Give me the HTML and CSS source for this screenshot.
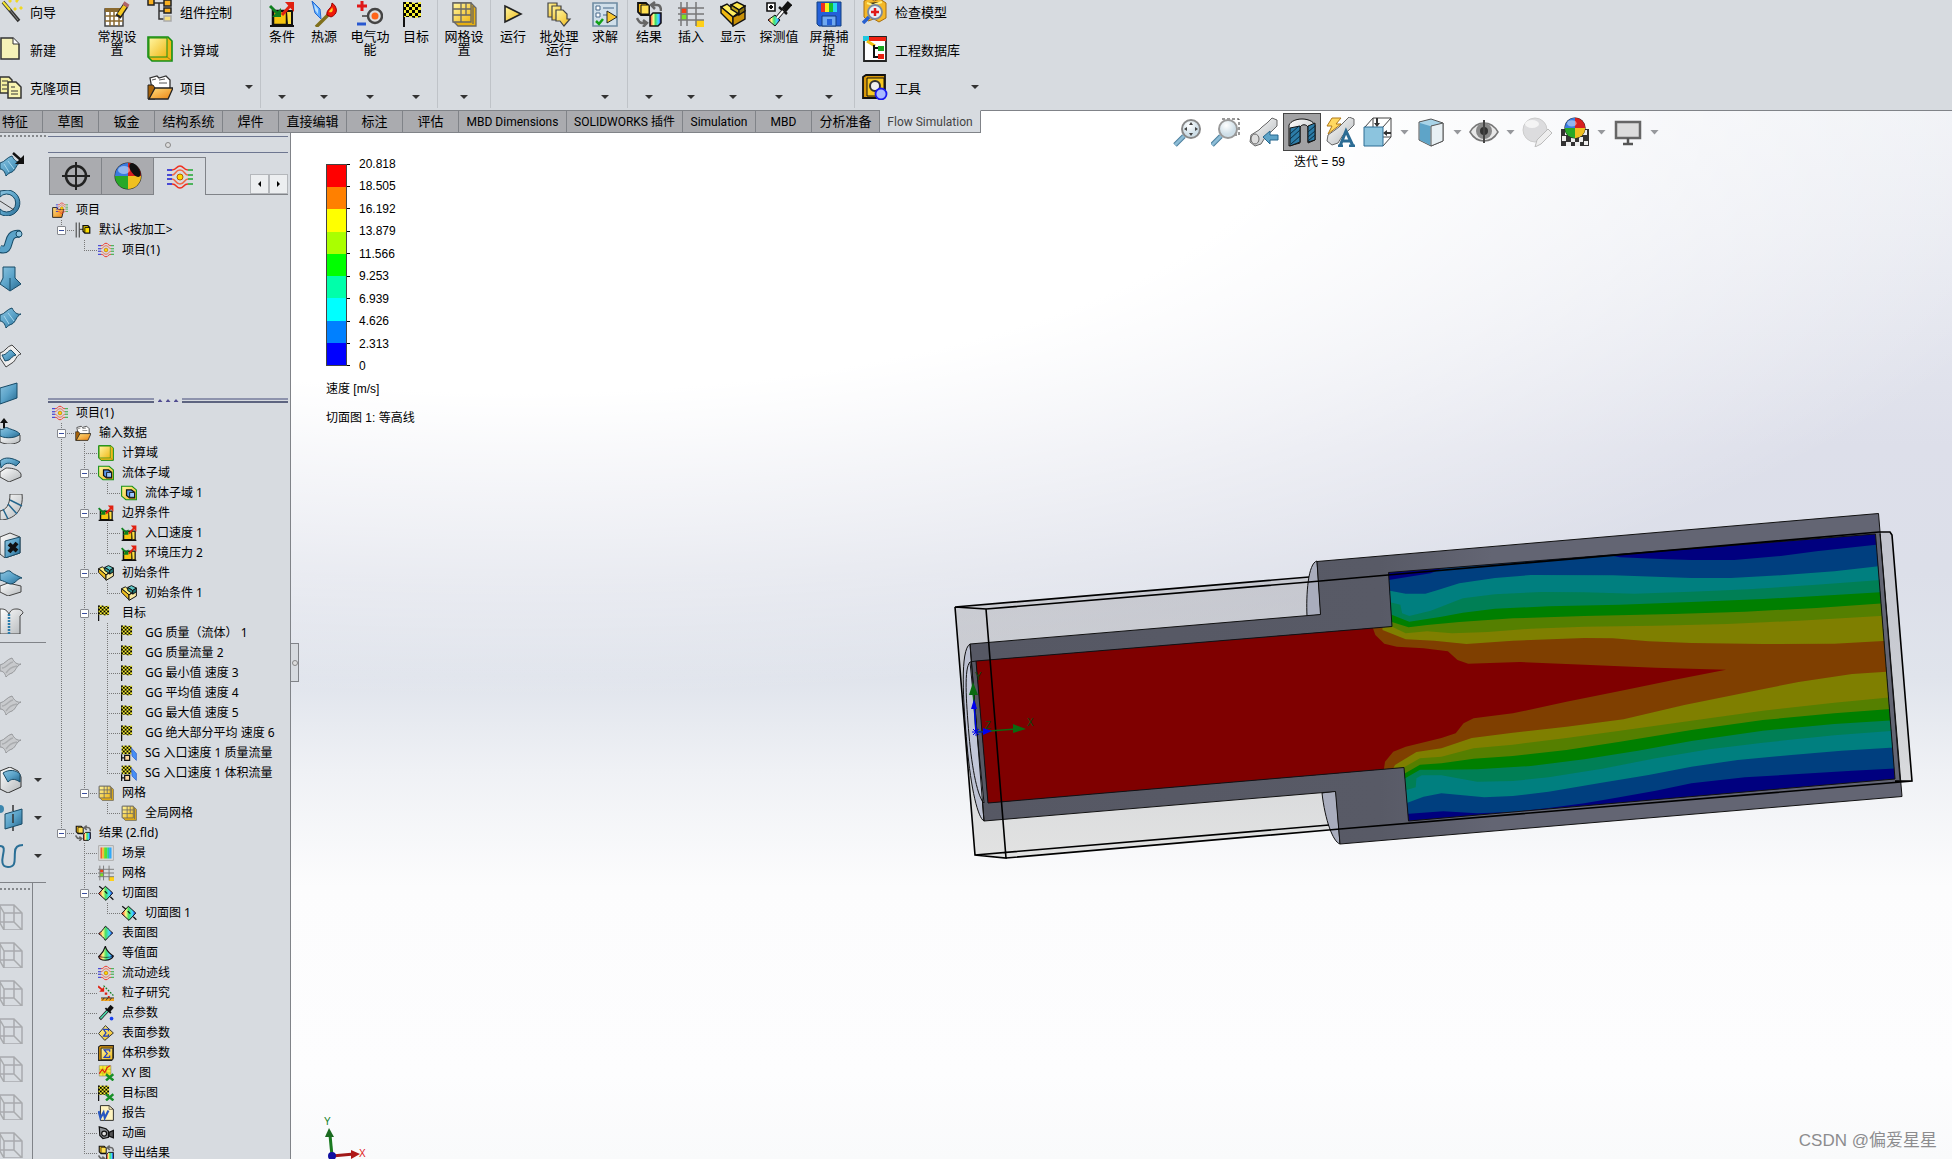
FILE: index.html
```html
<!DOCTYPE html>
<html lang="zh-CN">
<head>
<meta charset="utf-8">
<title>Flow Simulation</title>
<link rel="stylesheet" href="styles.css">
</head>
<body>
<svg class="defs" aria-hidden="true">
<defs>
<linearGradient id="gold" x1="0" y1="0" x2="1" y2="1"><stop offset="0" stop-color="#fff6a0"/><stop offset="1" stop-color="#f0b818"/></linearGradient>
<linearGradient id="orange" x1="0" y1="0" x2="1" y2="1"><stop offset="0" stop-color="#ffe080"/><stop offset="1" stop-color="#ea8210"/></linearGradient>
<linearGradient id="steel" x1="0" y1="0" x2="1" y2="1"><stop offset="0" stop-color="#8cc4e0"/><stop offset=".5" stop-color="#5aa2c8"/><stop offset="1" stop-color="#25678e"/></linearGradient>
<linearGradient id="silver" x1="0" y1="0" x2="1" y2="1"><stop offset="0" stop-color="#fff"/><stop offset="1" stop-color="#b4b8bb"/></linearGradient>
<linearGradient id="rain"><stop offset="0" stop-color="#f22"/><stop offset=".3" stop-color="#ff8"/><stop offset=".5" stop-color="#4d6"/><stop offset=".75" stop-color="#4df"/><stop offset="1" stop-color="#22e"/></linearGradient>
<radialGradient id="glass" cx=".4" cy=".3"><stop offset="0" stop-color="#fff"/><stop offset="1" stop-color="#cfdfe8"/></radialGradient>
<pattern id="check" width="6" height="6" patternUnits="userSpaceOnUse"><path fill="#f6ee30" d="M0 0h6v6H0z"/><path d="M0 0h3v3H0zM3 3h3v3H3z"/></pattern>
</defs>
<symbol id="i-wand" viewBox="0 0 26 26"><path d="M3 4 19 23" stroke="#333" stroke-width="3.5"/><path d="m3 4 7 8" stroke="#f4e430" stroke-width="2"/><path d="m10 12 8 10" stroke="#888"/><path fill="#f0d820" d="m10 1 2 2-2 2-2-2zm7 0 2 1-2 3-2-2zm-2 8 2 2-2 2-2-2zm6-1 2 2-2 2-2-2z"/></symbol>
<symbol id="i-new" viewBox="0 0 26 26"><path fill="#f6f2b8" stroke="#333" stroke-width="1.5" d="M1 2h12l6 6v15H1z"/><path fill="#fff" stroke="#333" d="M13 2v6h6"/></symbol>
<symbol id="i-clone" viewBox="0 0 26 26"><path fill="#f5f0a0" stroke="#333" stroke-width="1.5" d="M0 3h9l3 3v13H0z"/><path fill="#f8f4b0" stroke="#333" stroke-width="1.5" d="M8 8h8l5 5v11H8z"/><path stroke="#333" d="M2 7h6M2 11h5M2 15h5M11 13h4m-4 4h7m-7 3h7"/></symbol>
<symbol id="i-general" viewBox="0 0 26 26"><path fill="#fff" stroke="#444" stroke-width="1.5" d="M1 8h18v17H1z"/><path fill="#8a6a30" d="M1 7h18v4H1z"/><path stroke="#8a6a30" stroke-width="1.5" d="M6 11v14m4-14v14m5-14v14M1 15h18M1 20h18"/><path stroke="#222" stroke-width="6" d="m14 16 8-12"/><path stroke="#f5c820" stroke-width="4" d="m15 14 6-9"/><path stroke="#b0656a" stroke-width="6" d="m21 5 2-3"/></symbol>
<symbol id="i-comp" viewBox="0 0 26 26"><path fill="none" stroke="#333" stroke-width="1.5" d="M7 5h10M12 5v16h5M12 13h5"/><g stroke="#222" stroke-width="1.5" fill="#f9b020"><path d="M1 1h6v6H1zM17 2h7v6h-7zM17 10h7v5h-7z"/><path fill="#f8e080" stroke="#aaa" d="M17 18h7v5h-7z"/></g></symbol>
<symbol id="i-domain" viewBox="0 0 26 26"><path fill="#f0b818" stroke="#169016" stroke-width="1.6" d="M1 1h20l4 4v20H5l-4-4z"/><path fill="url(#gold)" stroke="#169016" d="M2 2h18v19H2z"/><path fill="none" stroke="#a87a08" d="m20 21 4 3"/></symbol>
<symbol id="i-project" viewBox="0 0 26 26"><path fill="#fff" stroke="#333" stroke-width="1.3" d="M5 15 3 4l7-2 2 2 7-2 4 4v9z"/><path stroke="#555" d="m12 6 6-1m-6 4h8M5 6l4-1"/><path fill="#a86208" stroke="#222" d="M1 11h5l2 3v11H1z"/><path fill="url(#orange)" stroke="#222" stroke-width="1.3" d="M2 25 8 14h18l-5 11z"/></symbol>
<symbol id="i-bc" viewBox="0 0 26 26"><path fill="#f6c510" stroke="#111" stroke-width="2.5" d="M4 10h14v14H4z"/><path fill="#ffe040" stroke="#111" stroke-width="2" d="M18 10h5v14h-4"/><path stroke="#111" stroke-width="2" d="M1 25h24"/><path stroke="#108020" stroke-width="3" d="m1 5 8 8"/><path fill="#108020" d="M12 7v9H3z"/><path stroke="#e02010" stroke-width="3" d="m13 14 8-9"/><path fill="#e02010" d="M16 1h9v10z"/></symbol>
<symbol id="i-heat" viewBox="0 0 26 26"><path fill="#58a8ff" stroke="#2468d0" d="m1 0 8 8 1 10-6-6z"/><path fill="#b8e0ff" d="m3 3 4 5v5L4 9z"/><path stroke="#80701c" stroke-width="3.5" d="m5 26 13-13"/><path fill="#f01808" stroke="#900" d="M16 14c-1-6 5-6 5-12 5 3 7 11-1 14z"/><path fill="#ffd020" d="M18 11c1-3 3-3 3-5 2 4 0 6-3 5z"/></symbol>
<symbol id="i-elec" viewBox="0 0 26 26"><path stroke="#e01818" stroke-width="3" d="M5 0v10M0 5h10"/><path stroke="#2858d0" stroke-width="3" d="M0 23h9"/><path stroke="#666" stroke-width="2" d="M5 15h9"/><circle cx="18" cy="15" r="7" fill="#ddd" stroke="#444" stroke-width="2.5"/><circle cx="18" cy="15" r="3.5" fill="#ff6418"/></symbol>
<symbol id="i-flag" viewBox="0 0 26 26"><path d="M1 1v25" stroke="#111" stroke-width="2"/><path fill="url(#check)" d="M1 1h6l5 1 6-1v15l-6 1-5-1H1z"/></symbol>
<symbol id="i-mesh" viewBox="0 0 26 26"><path fill="#e8b010" stroke="#666" stroke-width="1.3" d="M2 2h18l5 5v18H7l-5-5z"/><path fill="url(#gold)" stroke="#666" stroke-width="1.3" d="M2 2h18v19H2z"/><path stroke="#666" stroke-width="1.3" d="M2 14h18M10 2v19m5-19v12M2 8h18M22 5v18"/></symbol>
<symbol id="i-run" viewBox="0 0 26 26"><path fill="url(#gold)" stroke="#222" stroke-width="1.6" d="M5 5v16l16-8z"/></symbol>
<symbol id="i-batch" viewBox="0 0 26 26"><g fill="url(#gold)" stroke="#444" stroke-width="1.2"><path d="M2 2h9v14H2z"/><path d="M6 5h9v14H6z"/><path d="M10 9h7l4 4v5h3l-6 7-4-5h-4z"/></g></symbol>
<symbol id="i-solve" viewBox="0 0 26 26"><path fill="#d0dfea" stroke="#6f8ca3" stroke-width="1.6" d="M1 2h24v23H1z"/><path fill="#fff" stroke="#46688a" d="M4 5h4v4H4zM4 12h4v4H4z"/><path stroke="#46688a" d="M11 7h11M11 14h6"/><path fill="none" stroke="#12a018" stroke-width="2.5" d="m4 20 3 3 4-5"/><path fill="#f8c830" stroke="#222" d="M15 10v12l10-6z"/></symbol>
<symbol id="i-results" viewBox="0 0 26 26"><path fill="#f4b810" stroke="#111" stroke-width="1.8" d="M2 2h8l3 3v9H5l-3-3z"/><path fill="#ffe050" stroke="#111" d="M5 4h8v9H5z"/><path fill="url(#rain)" stroke="#111" stroke-width="1.5" d="m14 15 3-3h8v10l-3 3h-8z"/><path fill="none" stroke="#666" stroke-width="2.5" d="M16 4h5c3 0 4 3 4 6M19 1l-4 3 4 4M10 22H6c-3 0-4-3-5-5m6 2 4 3-4 4"/></symbol>
<symbol id="i-insert" viewBox="0 0 26 26"><path fill="#f44018" d="M3 7h6v5H3z"/><path fill="#80e028" d="M3 13h6v6H3z"/><path fill="#ffd018" d="M18 19h8v7h-8z"/><path stroke="#777" stroke-width="1.5" d="M0 7h26M0 13h26M0 19h26M3 1v24m6-24v24m9-24v24"/></symbol>
<symbol id="i-show" viewBox="0 0 26 26"><g stroke="#111" stroke-width="1.4"><path fill="#ffee60" d="m1 6 6-3 11 9-5 4z"/><path fill="#f0b810" d="M1 6v6l12 12v-8z"/><path fill="#c89008" d="m13 16 12-6v8l-12 7z"/><path fill="#ffe84a" d="m11 4 6-3 8 4-6 4z"/><path fill="#b8a018" d="M11 4v4l8 5V9z"/><path fill="#887010" d="m19 9 6-4v5l-6 4z"/></g></symbol>
<symbol id="i-init" viewBox="0 0 26 26"><g stroke="#111" stroke-width="1.6"><path fill="#fff080" d="m1 6 6-3 11 9-5 4z"/><path fill="#f0c020" d="M1 6v6l12 12v-8z"/><path fill="#f8e8a0" d="m13 16 12-6v8l-12 7z"/><path fill="#60c8c8" d="m11 4 6-3 8 4-6 4z"/><path fill="#309898" d="M11 4v5l8 5V9z"/><path fill="#207878" d="m19 9 6-4v6l-6 4z"/></g></symbol>
<symbol id="i-probe" viewBox="0 0 26 26"><path fill="#fff" stroke="#111" stroke-width="1.6" d="M1 2h8v8H1z"/><path stroke="#111" stroke-width="2" d="M5 4v4M3 6h4"/><path fill="url(#rain)" stroke="#111" d="m9 14 5 5-5 6-7-6z"/><path stroke="#111" stroke-width="6" d="m18 9 6-7"/><path stroke="#111" stroke-width="2.5" d="m13 6 8 7"/><path stroke="#222" stroke-width="4" d="m17 10-6 7"/><path stroke="#fff" stroke-width="2" d="m17 10-6 7"/></symbol>
<symbol id="i-save" viewBox="0 0 26 26"><path fill="#2460d8" stroke="#124080" d="M1 1h24v24H3l-2-2z"/><path fill="#f03020" d="M5 2h4v9H5z"/><path fill="#f8f020" d="M9 2h4v9H9z"/><path fill="#18c030" d="M13 2h4v9h-4z"/><path fill="#28d8f0" d="M17 2h4v9h-4z"/><path fill="#6fa8f0" stroke="#123a80" d="M6 15h14v10H6z"/><path fill="#2460d8" d="M11 18h5v6h-5z"/></symbol>
<symbol id="i-check" viewBox="0 0 26 26"><path fill="#f4b828" stroke="#a87010" d="m2 3 6-3 4 3 6-2 6 4v15l-7 4-5-3-6 2-4-4z"/><path stroke="#fff080" stroke-width="2" d="m5 5 6 2 9-3"/><circle cx="13" cy="14" r="7" fill="#e8f0fa" stroke="#7888a0" stroke-width="1.8"/><path stroke="#e01818" stroke-width="2.5" d="M13 10v8m-4-4h8"/><path stroke="#2860d0" stroke-width="3.5" d="m1 25 6-6"/></symbol>
<symbol id="i-db" viewBox="0 0 26 26"><path fill="#fff" stroke="#222" stroke-width="1.8" d="M2 1h22v24H2z"/><path fill="#f02010" d="M7 1h17v4H7z"/><path fill="#20c8e0" d="M1 0h6v5H1z"/><path fill="none" stroke="#f0c010" stroke-width="3" d="m5 5 8 5"/><path fill="none" stroke="#111" stroke-width="2" d="M12 9v12h5m-5-9h5"/><path fill="#18a820" d="M16 10h6v5h-6z"/><path fill="#e82010" d="M16 18h6v5h-6z"/></symbol>
<symbol id="i-tools" viewBox="0 0 26 26"><path fill="#d89808" stroke="#111" stroke-width="1.8" d="M1 3 4 1h19v20l-2 3H1z"/><path fill="#f8c820" stroke="#111" d="M5 4h17v18H5z"/><circle cx="13" cy="12" r="5" fill="#eee" stroke="#333" stroke-width="2"/><circle cx="19" cy="20" r="5.500" fill="#a8b8ff" stroke="#1818f0" stroke-width="1.8"/></symbol>
<symbol id="i-flow" viewBox="0 0 26 26"><g fill="none" stroke-width="1.500"><path stroke="#f03020" d="M5 6c5 0 4-4 8-4s3 4 8 4M5 20c5 0 4 4 8 4s3-4 8-4"/><path stroke="#f06848" d="M5 11c4 0 3-5 8-5s4 5 8 5M5 15c4 0 3 5 8 5s4-5 8-5"/><path stroke="#1818d0" d="M0 6h5M0 11h5M0 15h5M0 20h5"/><path stroke="#20a830" d="M21 6h5M21 11h5M21 15h5M21 20h5"/></g><circle cx="13" cy="13" r="3" fill="#ffd800" stroke="#b06000"/></symbol>
<symbol id="i-flowproj" viewBox="0 0 26 26"><path fill="url(#orange)" stroke="#222" stroke-width="1.5" d="M1 9h7l2 3h9l-3 13H1z"/><g transform="translate(6 0) scale(.77)"><use href="#i-flow" width="26" height="26"/></g></symbol>
<symbol id="i-config" viewBox="0 0 26 26"><path stroke="#555" stroke-width="2" d="M2 1v24M7 1v24M7 12h7"/><path fill="#ffe000" stroke="#111" stroke-width="2" d="M13 6h8l3 3v9h-8l-3-3z"/><path fill="none" stroke="#111" stroke-width="1.500" d="M16 9h8m-8 0v9"/></symbol>
<symbol id="i-sub" viewBox="0 0 26 26"><path fill="url(#gold)" stroke="#169016" stroke-width="1.800" d="M1 2h17l7 6v16H8l-7-6z"/><path fill="#5898f0" stroke="#111" stroke-width="2" d="M9 8h8l5 4v9h-8l-5-4z"/><path fill="#a0c8ff" stroke="#111" stroke-width="1.500" d="M14 12h8v8h-8z"/></symbol>
<symbol id="i-sg" viewBox="0 0 26 26"><path fill="url(#check)" d="M1 1h16v14H1z"/><path stroke="#111" stroke-width="2" d="M1 15v11m0-5h5"/><path fill="#ffd8a0" stroke="#111" stroke-width="2" d="M6 17h8v8H6z"/><path fill="#4890f8" stroke="#2050c0" d="m17 5 8 9v11l-7-7z"/></symbol>
<symbol id="i-scene" viewBox="0 0 26 26"><path fill="#ddd" stroke="#aaa" stroke-width="1.500" d="M1 1h24v24H1z"/><path fill="#f06030" d="M4 4h3v18H4z"/><path fill="#f8c030" d="M7 4h3v18H7z"/><path fill="#58e030" d="M10 4h5v18h-5z"/><path fill="#20d0a0" d="M15 4h3v18h-3z"/><path fill="#30a8f8" d="M18 4h4v18h-4z"/></symbol>
<symbol id="i-surface" viewBox="0 0 26 26"><path fill="url(#rain)" stroke="#111" stroke-width="1.600" d="M12 2c5 3 7 8 12 11-3 3-8 7-12 12-3-5-6-7-11-11 5-3 7-7 11-12z"/></symbol>
<symbol id="i-cut" viewBox="0 0 26 26"><path fill="url(#rain)" stroke="#111" stroke-width="1.600" d="m12 2 12 11-11 12L1 14z"/><path stroke="#111" stroke-width="2" d="m2 2 6 5m3 3 4 4m5 5 5 5"/></symbol>
<symbol id="i-iso" viewBox="0 0 26 26"><path fill="url(#rain)" stroke="#111" stroke-width="1.800" d="M12 2c2 10 8 12 13 16-4 9-22 9-24 1C5 15 9 12 12 2z"/><path fill="none" stroke="#111" d="M1 18c6 3 17 3 24 0"/></symbol>
<symbol id="i-particle" viewBox="0 0 26 26"><path stroke="#e02010" stroke-width="3" d="m0 2 7 6"/><path fill="#e02010" d="M10 3v8H2zM11 12h4v4h-4zM16 18h3v3h-3z"/><path stroke="#108020" stroke-width="2" stroke-dasharray="3 2" d="m9 1 16 16"/><path fill="#f8a820" d="M5 21h21v5H5z"/><path stroke="#333" stroke-width="1.500" d="M5 21h21M7 25l3-4m3 4 3-4m3 4 3-4"/></symbol>
<symbol id="i-point" viewBox="0 0 26 26"><path stroke="#222" stroke-width="5" d="M3 23 16 9"/><path stroke="#50e0b0" stroke-width="2.500" d="m4 22 12-13"/><path stroke="#111" stroke-width="7" d="m17 9 6-7"/><path stroke="#111" stroke-width="3" d="m12 5 9 8"/><circle cx="22" cy="22" r="3" fill="#1840f0"/></symbol>
<symbol id="i-surfp" viewBox="0 0 26 26"><path fill="url(#gold)" stroke="#333" stroke-width="1.600" d="M12 1 25 13 11 25 1 14z"/><path fill="none" stroke="#2040c0" stroke-width="2" d="M17 10V7H9l4 6-4 5h8v-3"/></symbol>
<symbol id="i-volp" viewBox="0 0 26 26"><path fill="#e09808" stroke="#222" stroke-width="1.800" d="m1 3 3-2h21v20l-3 4H1z"/><path fill="url(#gold)" stroke="#222" stroke-width="1.500" d="M5 5h19v19H5z"/><path fill="none" stroke="#2040c0" stroke-width="2" d="M19 11V8h-9l5 6-5 6h9v-3"/></symbol>
<symbol id="i-xy" viewBox="0 0 26 26"><path fill="#f8ec30" stroke="#888" d="M2 1h19v17H2z"/><path stroke="#c0a810" d="M8 1v17m6-17v17M2 7h19M2 13h19"/><path fill="none" stroke="#e01810" stroke-width="1.800" d="m2 14 5-7 4 5 4-8 5-3"/><path stroke="#189028" stroke-width="4" d="m13 15 12 10M25 15 13 25"/></symbol>
<symbol id="i-goalplot" viewBox="0 0 26 26"><path d="M1 1v25" stroke="#111" stroke-width="2"/><path fill="url(#check)" d="M1 1h17v15H1z"/><path stroke="#189028" stroke-width="4" d="m13 15 12 10M25 15 13 25"/></symbol>
<symbol id="i-report" viewBox="0 0 26 26"><path fill="#fff4c0" stroke="#222" stroke-width="1.500" d="M4 1h14l7 6v18H4z"/><path fill="none" stroke="#222" d="M18 1v6h7"/><path fill="none" stroke="#2858c0" stroke-width="3.500" d="m1 10 3 11 5-9 2 9 6-12"/></symbol>
<symbol id="i-anim" viewBox="0 0 26 26"><path fill="#909498" stroke="#111" stroke-width="2" d="M2 3 13 6l4 4v10l-9 2-5-5z"/><circle cx="10" cy="14" r="4" fill="#ddd" stroke="#111" stroke-width="2"/><path fill="#555" stroke="#111" stroke-width="2" d="m18 12 7-3v12l-7-3z"/></symbol>

<symbol id="s-ribbon" viewBox="0 0 26 26"><path fill="url(#steel)" stroke="#174a66" d="M0 11c5-1 7-6 12-7 2 4 5 7 9 6-5 2-5 8-9 10-3 1-4 2-6 4-1-4-3-7-6-7z"/><path fill="none" stroke="#a8d8ee" d="m4 12 5 8m-1-11 6 8"/></symbol>
<symbol id="s-ribbon-arrow" viewBox="0 0 26 26"><use href="#s-ribbon" width="26" height="26"/><path stroke="#111" stroke-width="2.500" d="m13 1 9 8"/><path fill="#111" d="M24 3v9h-9z"/></symbol>
<symbol id="s-revolve" viewBox="0 0 26 26"><path fill="url(#steel)" stroke="#174a66" fill-rule="evenodd" d="M8 0a13 13 0 1 1-8 24v-5a9 9 0 1 0 0-12V1z"/><path stroke="#444" d="m0 11 14 9"/></symbol>
<symbol id="s-sweep" viewBox="0 0 26 26"><path fill="none" stroke="#174a66" stroke-width="8" d="M0 21c14 4 3-17 20-15"/><path fill="none" stroke="#5aa2c8" stroke-width="6" d="M0 21c14 4 3-17 20-15"/><circle cx="19" cy="6" r="3" fill="#8cc4e0" stroke="#174a66"/></symbol>
<symbol id="s-loft" viewBox="0 0 26 26"><path fill="url(#steel)" stroke="#174a66" d="M3 1h12v11l6 6-11 7L0 18l3-6z"/><path stroke="#174a66" d="M10 12v12"/></symbol>
<symbol id="s-offset" viewBox="0 0 26 26"><path fill="#eee" stroke="#444" d="M0 11c5-1 7-7 12-8l9 9c-5 1-5 7-9 9l-6 4-6-9z"/><path fill="url(#steel)" stroke="#174a66" d="M2 13c5 0 5-4 9-5l5 5c-4 1-4 3-7 5l-4 1z"/></symbol>
<symbol id="s-plane" viewBox="0 0 26 26"><path fill="url(#steel)" stroke="#174a66" d="M0 8 17 3v15L0 24z"/></symbol>
<symbol id="s-extrude" viewBox="0 0 26 26"><path fill="url(#silver)" stroke="#444" d="M0 17h20v6c-5 4-14 4-20 1z"/><path fill="url(#steel)" stroke="#174a66" d="M0 11c4 2 4-3 8-1s8 2 12 6c-3 4-14 5-20 2z"/><path stroke="#111" stroke-width="2" d="M4 10V3"/><path fill="#111" d="m4 0 4 5H0z"/></symbol>
<symbol id="s-fillet" viewBox="0 0 26 26"><path fill="url(#silver)" stroke="#444" d="m0 16 6-4c3 0 12 0 15 6v3l-12 5-9-5z"/><path fill="url(#steel)" stroke="#174a66" d="M0 5c5-5 13-3 20 1l-4 4C10 6 5 6 1 12z"/></symbol>
<symbol id="s-bend" viewBox="0 0 26 26"><path fill="url(#silver)" stroke="#444" d="M10 0h12c2 16-8 26-22 26V17c6-1 10-6 10-17z"/><path stroke="#25678e" stroke-width="1.500" d="m10 6 12 6M8 10l9 10M3 15l5 10"/></symbol>
<symbol id="s-delface" viewBox="0 0 26 26"><path fill="url(#silver)" stroke="#444" d="m0 5 10-4 10 4v16l-15 5-5-4z"/><path fill="url(#steel)" stroke="#174a66" d="m5 9 15-4v16L5 26z"/><path stroke="#111" stroke-width="4" d="m9 12 8 7m0-8-8 9"/></symbol>
<symbol id="s-replace" viewBox="0 0 26 26"><path fill="url(#silver)" stroke="#444" d="m0 16 8-3 13 3v6L8 26l-8-4z"/><path fill="url(#steel)" stroke="#174a66" d="M0 3c6 1 5-3 10-2 3 3 6 4 12 7-5 0-6 6-12 6C5 12 4 11 0 10z"/></symbol>
<symbol id="s-knit" viewBox="0 0 26 26"><path fill="url(#silver)" stroke="#444" d="M0 1c4 0 6 0 9 5 2-5 5-5 8-5 3 0 6 2 6 4l-3 3v18H0z"/><path stroke="#2a7cab" stroke-width="2.500" stroke-dasharray="2 1" d="M9 6v20"/></symbol>
<symbol id="s-gray" viewBox="0 0 26 26"><path fill="#c8cacd" stroke="#96989b" d="M0 12c5-1 7-6 12-7 2 4 5 7 9 6-5 2-5 7-9 9-3 1-4 2-6 4-1-4-3-6-6-6z"/><path fill="none" stroke="#abadb0" stroke-width="1.500" d="M2 15c5 0 7-6 11-6M6 20c3-4 5-6 11-7"/></symbol>
<symbol id="s-cube2" viewBox="0 0 26 26"><path fill="url(#silver)" stroke="#333" d="M0 4 10 0l8 4 3 6v10L8 26l-8-4z"/><path fill="url(#steel)" stroke="#174a66" d="M3 6c6-4 13-3 17 1v8c-6-4-9-3-12 0z"/></symbol>
<symbol id="s-refplane" viewBox="0 0 26 26"><path fill="url(#steel)" stroke="#174a66" d="m5 9 17-5v15L5 24z"/><circle cx="0" cy="4" r="4" fill="#3d87ae"/><path stroke="#333" stroke-width="1.500" d="M13 0v6m0 3v9m0 4v4"/></symbol>
<symbol id="s-curve" viewBox="0 0 26 26"><path fill="none" stroke="#2a6f96" stroke-width="2" d="M0 3c5 0 4 4 3 9S1 24 8 24c9 0 6-8 7-15 0-5 3-7 8-7"/></symbol>
<symbol id="s-view" viewBox="0 0 26 26"><g fill="none" stroke="#a9abae" stroke-width="1.500"><path d="M0 1h14l8 8v17H4l-4-7zM4 9h18M4 9v17M0 2l4 7M14 1v17l8 8M0 18h14"/></g></symbol>
<symbol id="h-ball" viewBox="0 0 28 28"><circle cx="14" cy="14" r="13.500" fill="#222"/><path fill="#3a7be0" d="M14 14H1A13 13 0 0 1 14 1z"/><path fill="#d82020" d="M14 14V1a13 13 0 0 1 13 13z"/><path fill="#28a828" d="M14 14v13A13 13 0 0 1 1 14z"/><path fill="#f0c020" d="M14 14h13a13 13 0 0 1-13 13z"/><ellipse cx="10" cy="8" rx="6" ry="4" fill="#fff" opacity=".45"/></symbol>
</svg>

<header class="ribbon">
  <div class="col col-first">
    <button class="row"><svg class="ic"><use href="#i-wand"/></svg>向导</button>
    <button class="row"><svg class="ic"><use href="#i-new"/></svg>新建</button>
    <button class="row"><svg class="ic"><use href="#i-clone"/></svg>克隆项目</button>
  </div>
  <button class="big wide"><svg class="ic"><use href="#i-general"/></svg><span>常规设置</span></button>
  <div class="col col-set">
    <button class="row"><svg class="ic"><use href="#i-comp"/></svg>组件控制</button>
    <button class="row"><svg class="ic"><use href="#i-domain"/></svg>计算域</button>
    <button class="row"><svg class="ic"><use href="#i-project"/></svg>项目<i class="arrow"></i></button>
  </div>
  <div class="group">
    <button class="big"><svg class="ic"><use href="#i-bc"/></svg><span>条件</span><i class="arrow"></i></button>
    <button class="big"><svg class="ic"><use href="#i-heat"/></svg><span>热源</span><i class="arrow"></i></button>
    <button class="big wide"><svg class="ic"><use href="#i-elec"/></svg><span>电气功能</span><i class="arrow"></i></button>
    <button class="big"><svg class="ic"><use href="#i-flag"/></svg><span>目标</span><i class="arrow"></i></button>
  </div>
  <div class="group padded">
    <button class="big wide"><svg class="ic"><use href="#i-mesh"/></svg><span>网格设置</span><i class="arrow"></i></button>
  </div>
  <div class="group padded">
    <button class="big"><svg class="ic"><use href="#i-run"/></svg><span>运行</span></button>
    <button class="big wide"><svg class="ic"><use href="#i-batch"/></svg><span>批处理运行</span></button>
    <button class="big"><svg class="ic"><use href="#i-solve"/></svg><span>求解</span><i class="arrow"></i></button>
  </div>
  <div class="group">
    <button class="big"><svg class="ic"><use href="#i-results"/></svg><span>结果</span><i class="arrow"></i></button>
    <button class="big"><svg class="ic"><use href="#i-insert"/></svg><span>插入</span><i class="arrow"></i></button>
    <button class="big"><svg class="ic"><use href="#i-show"/></svg><span>显示</span><i class="arrow"></i></button>
    <button class="big wide"><svg class="ic"><use href="#i-probe"/></svg><span>探测值</span><i class="arrow"></i></button>
    <button class="big wide"><svg class="ic"><use href="#i-save"/></svg><span>屏幕捕捉</span><i class="arrow"></i></button>
  </div>
  <div class="col col-tools">
    <button class="row"><svg class="ic"><use href="#i-check"/></svg>检查模型</button>
    <button class="row"><svg class="ic"><use href="#i-db"/></svg>工程数据库</button>
    <button class="row"><svg class="ic"><use href="#i-tools"/></svg>工具<i class="arrow"></i></button>
  </div>
</header>

<div class="workspace">
  <nav class="tabs">
    <button class="tab t-first">特征</button><button class="tab">草图</button><button class="tab">钣金</button><button class="tab t-mid">结构系统</button><button class="tab">焊件</button><button class="tab t-mid">直接编辑</button><button class="tab">标注</button><button class="tab">评估</button><button class="tab t-dim">MBD Dimensions</button><button class="tab t-addin">SOLIDWORKS 插件</button><button class="tab t-sim">Simulation</button><button class="tab t-mbd">MBD</button><button class="tab t-prep">分析准备</button><button class="tab t-flow active">Flow Simulation</button>
  </nav>

  <aside class="side">
    <div class="toolbar">
      <div class="grip"></div>
      <div class="tools">
        <button class="tool" aria-label="曲面"><svg class="ic"><use href="#s-ribbon-arrow"/></svg></button>
        <button class="tool" aria-label="旋转"><svg class="ic"><use href="#s-revolve"/></svg></button>
        <button class="tool" aria-label="扫描"><svg class="ic"><use href="#s-sweep"/></svg></button>
        <button class="tool" aria-label="放样"><svg class="ic"><use href="#s-loft"/></svg></button>
        <button class="tool" aria-label="边界"><svg class="ic"><use href="#s-ribbon"/></svg></button>
        <button class="tool" aria-label="等距"><svg class="ic"><use href="#s-offset"/></svg></button>
        <button class="tool" aria-label="平面"><svg class="ic"><use href="#s-plane"/></svg></button>
        <button class="tool" aria-label="拉伸"><svg class="ic"><use href="#s-extrude"/></svg></button>
        <button class="tool" aria-label="圆角"><svg class="ic"><use href="#s-fillet"/></svg></button>
        <button class="tool" aria-label="直纹"><svg class="ic"><use href="#s-bend"/></svg></button>
        <button class="tool" aria-label="删除面"><svg class="ic"><use href="#s-delface"/></svg></button>
        <button class="tool" aria-label="替换面"><svg class="ic"><use href="#s-replace"/></svg></button>
        <button class="tool" aria-label="缝合"><svg class="ic"><use href="#s-knit"/></svg></button>
      </div>
      <div class="tools ruled">
        <button class="tool" aria-label="延伸"><svg class="ic"><use href="#s-gray"/></svg></button>
        <button class="tool" aria-label="剪裁"><svg class="ic"><use href="#s-gray"/></svg></button>
        <button class="tool" aria-label="解除剪裁"><svg class="ic"><use href="#s-gray"/></svg></button>
        <button class="tool" aria-label="圆角面"><svg class="ic"><use href="#s-cube2"/></svg><i class="arrow"></i></button>
        <button class="tool" aria-label="参考"><svg class="ic"><use href="#s-refplane"/></svg><i class="arrow"></i></button>
        <button class="tool" aria-label="曲线"><svg class="ic"><use href="#s-curve"/></svg><i class="arrow"></i></button>
      </div>
      <div class="views">
        <div class="view-strip">
          <div class="grip"></div>
          <button class="tool" aria-label="前视"><svg class="ic"><use href="#s-view"/></svg></button>
          <button class="tool" aria-label="后视"><svg class="ic"><use href="#s-view"/></svg></button>
          <button class="tool" aria-label="左视"><svg class="ic"><use href="#s-view"/></svg></button>
          <button class="tool" aria-label="右视"><svg class="ic"><use href="#s-view"/></svg></button>
          <button class="tool" aria-label="上视"><svg class="ic"><use href="#s-view"/></svg></button>
          <button class="tool" aria-label="下视"><svg class="ic"><use href="#s-view"/></svg></button>
          <button class="tool" aria-label="等轴测"><svg class="ic"><use href="#s-view"/></svg></button>
        </div>
      </div>
    </div>

    <div class="panel">
      <div class="pull"><i class="knob"></i></div>
      <div class="ptabs">
        <button class="ptab" aria-label="尺寸"><svg viewBox="0 0 28 28"><g fill="none" stroke="#222" stroke-width="2.500"><circle cx="14" cy="14" r="10"/><path stroke-width="2" d="M14 0v28M0 14h28"/></g></svg></button>
        <button class="ptab" aria-label="外观"><svg viewBox="0 0 28 28"><use href="#h-ball" width="28" height="28"/><ellipse cx="21" cy="8" rx="4" ry="8" transform="rotate(-35 21 8)" fill="#111"/></svg></button>
        <button class="ptab on" aria-label="流动分析"><svg viewBox="0 0 26 26"><use href="#i-flow" width="26" height="26"/></svg></button>
        <div class="scroll"><button aria-label="左"><i class="tri left"></i></button><button aria-label="右"><i class="tri right"></i></button></div>
      </div>
      <ul class="tree upper">
        <li><div class="node"><svg class="ti"><use href="#i-flowproj"/></svg>项目</div>
          <ul class="l1"><li><div class="node"><button class="box" aria-label="折叠"></button><svg class="ti"><use href="#i-config"/></svg>默认&lt;按加工&gt;</div>
            <ul><li><div class="node"><svg class="ti"><use href="#i-flow"/></svg>项目(1)</div></li></ul></li></ul></li>
      </ul>
      <div class="splitter"><i></i><span><b></b><b></b><b></b></span><i></i></div>
      <ul class="tree">
        <li><div class="node"><svg class="ti"><use href="#i-flow"/></svg>项目(1)</div>
          <ul class="l1">
            <li><div class="node"><button class="box" aria-label="折叠"></button><svg class="ti"><use href="#i-project"/></svg>输入数据</div>
              <ul>
                <li><div class="node"><svg class="ti"><use href="#i-domain"/></svg>计算域</div></li>
                <li><div class="node"><button class="box" aria-label="折叠"></button><svg class="ti"><use href="#i-sub"/></svg>流体子域</div>
                  <ul><li><div class="node"><svg class="ti"><use href="#i-sub"/></svg>流体子域 1</div></li></ul></li>
                <li><div class="node"><button class="box" aria-label="折叠"></button><svg class="ti"><use href="#i-bc"/></svg>边界条件</div>
                  <ul><li><div class="node"><svg class="ti"><use href="#i-bc"/></svg>入口速度 1</div></li>
                  <li><div class="node"><svg class="ti"><use href="#i-bc"/></svg>环境压力 2</div></li></ul></li>
                <li><div class="node"><button class="box" aria-label="折叠"></button><svg class="ti"><use href="#i-init"/></svg>初始条件</div>
                  <ul><li><div class="node"><svg class="ti"><use href="#i-init"/></svg>初始条件 1</div></li></ul></li>
                <li><div class="node"><button class="box" aria-label="折叠"></button><svg class="ti"><use href="#i-flag"/></svg>目标</div>
                  <ul>
                    <li><div class="node"><svg class="ti"><use href="#i-flag"/></svg>GG 质量（流体） 1</div></li>
                    <li><div class="node"><svg class="ti"><use href="#i-flag"/></svg>GG 质量流量 2</div></li>
                    <li><div class="node"><svg class="ti"><use href="#i-flag"/></svg>GG 最小值 速度 3</div></li>
                    <li><div class="node"><svg class="ti"><use href="#i-flag"/></svg>GG 平均值 速度 4</div></li>
                    <li><div class="node"><svg class="ti"><use href="#i-flag"/></svg>GG 最大值 速度 5</div></li>
                    <li><div class="node"><svg class="ti"><use href="#i-flag"/></svg>GG 绝大部分平均 速度 6</div></li>
                    <li><div class="node"><svg class="ti"><use href="#i-sg"/></svg>SG 入口速度 1 质量流量</div></li>
                    <li><div class="node"><svg class="ti"><use href="#i-sg"/></svg>SG 入口速度 1 体积流量</div></li>
                  </ul></li>
                <li><div class="node"><button class="box" aria-label="折叠"></button><svg class="ti"><use href="#i-mesh"/></svg>网格</div>
                  <ul><li><div class="node"><svg class="ti"><use href="#i-mesh"/></svg>全局网格</div></li></ul></li>
              </ul></li>
            <li><div class="node"><button class="box" aria-label="折叠"></button><svg class="ti"><use href="#i-results"/></svg>结果 (2.fld)</div>
              <ul>
                <li><div class="node"><svg class="ti"><use href="#i-scene"/></svg>场景</div></li>
                <li><div class="node"><svg class="ti"><use href="#i-insert"/></svg>网格</div></li>
                <li><div class="node"><button class="box" aria-label="折叠"></button><svg class="ti"><use href="#i-cut"/></svg>切面图</div>
                  <ul><li><div class="node"><svg class="ti"><use href="#i-cut"/></svg>切面图 1</div></li></ul></li>
                <li><div class="node"><svg class="ti"><use href="#i-surface"/></svg>表面图</div></li>
                <li><div class="node"><svg class="ti"><use href="#i-iso"/></svg>等值面</div></li>
                <li><div class="node"><svg class="ti"><use href="#i-flow"/></svg>流动迹线</div></li>
                <li><div class="node"><svg class="ti"><use href="#i-particle"/></svg>粒子研究</div></li>
                <li><div class="node"><svg class="ti"><use href="#i-point"/></svg>点参数</div></li>
                <li><div class="node"><svg class="ti"><use href="#i-surfp"/></svg>表面参数</div></li>
                <li><div class="node"><svg class="ti"><use href="#i-volp"/></svg>体积参数</div></li>
                <li><div class="node"><svg class="ti"><use href="#i-xy"/></svg>XY 图</div></li>
                <li><div class="node"><svg class="ti"><use href="#i-goalplot"/></svg>目标图</div></li>
                <li><div class="node"><svg class="ti"><use href="#i-report"/></svg>报告</div></li>
                <li><div class="node"><svg class="ti"><use href="#i-anim"/></svg>动画</div></li>
                <li><div class="node"><svg class="ti"><use href="#i-results"/></svg>导出结果</div></li>
              </ul></li>
          </ul></li>
      </ul>
    </div>
  </aside>

  <main class="viewport">
    <div class="hud">
      <button aria-label="整屏显示"><svg viewBox="0 0 30 30"><path stroke="#4a7e9c" stroke-width="5" d="m2 28 9-9"/><path stroke="#8cbcd6" stroke-width="3" d="m2 28 9-9"/><circle cx="18" cy="12" r="9" fill="url(#glass)" stroke="#888" stroke-width="2"/><path fill="#444" d="m18 5 2 3h-4zm0 14 2-3h-4zM11 12l3-2v4zm14 0-3-2v4z"/></svg></button>
      <button aria-label="局部放大"><svg viewBox="0 0 30 30"><path fill="none" stroke="#333" stroke-dasharray="3 2" d="M11 2h17v16h-8"/><path stroke="#4a7e9c" stroke-width="5" d="m1 28 9-9"/><path stroke="#8cbcd6" stroke-width="3" d="m1 28 9-9"/><circle cx="17" cy="12" r="9" fill="url(#glass)" stroke="#999" stroke-width="2"/></svg></button>
      <button aria-label="上一视图"><svg viewBox="0 0 30 30"><path fill="url(#silver)" stroke="#666" d="m2 18 8-5 3-3 5-4 5-5 5 2v6l-5 5-6 5-5 8-6 2-5-4z"/><ellipse cx="6" cy="22" rx="4" ry="5" fill="#ddd" stroke="#666"/><path fill="#5ea4c8" stroke="#25678e" d="m14 20 7-6v4h8v5h-8v4z"/></svg></button>
      <button class="pressed" aria-label="剖面视图"><svg viewBox="0 0 30 30"><path fill="url(#silver)" stroke="#111" d="M2 8c4-8 22-8 26 0v15l-7 3V10c-2-3-6-3-8 0v16l-11 3z"/><path fill="#2c7ca8" stroke="#111" d="m3 11 10-2v16L3 29zM21 9l7-3v17l-7 2z"/><path stroke="#0a2c40" d="m3 17 9-8M3 22l10-9M4 27l9-8m8-4 7-6m-7 11 7-6m-7 10 7-6"/></svg></button>
      <button aria-label="动态注解"><svg viewBox="0 0 30 30"><path fill="url(#silver)" stroke="#666" d="m3 18 7-5 4-3 5-5 5-5 5 2v6l-5 5-6 5-5 8-6 2-5-4z"/><path fill="#ffd860" stroke="#b07818" d="M7 1h9l-5 6h5L3 17l4-8H2z"/><path fill="none" stroke="#2c6c94" stroke-width="3" d="m15 29 6-15 7 15m-11-5h8m-12 5h5m6 0h6"/></svg></button>
      <button aria-label="视图定向"><svg viewBox="0 0 30 30"><path fill="#fff" stroke="#444" d="m2 10 8-9h18v19l-8 9"/><path fill="none" stroke="#444" d="M10 1v9m18 10h-8m0-10 8-9"/><path fill="#8cc4de" stroke="#2c6c94" d="M1 10h19v19H1z"/><path stroke="#333" stroke-width="2" d="M14 1v7m14 8h-6"/><path fill="#333" d="m14 10-3-4h6zm6 6 4-3v6z"/></svg></button><i class="arrow soft"></i>
      <button aria-label="显示样式"><svg viewBox="0 0 30 30"><path fill="#a8d4e8" stroke="#555" d="m3 5 12-3 12 4v18l-12 5-12-6z"/><path fill="#e8f0f4" stroke="#555" d="m15 9 12-3v18l-12 5z"/><path fill="#5ea4c8" d="m4 6 10 3v19L4 23z"/></svg></button><i class="arrow soft"></i>
      <button aria-label="隐藏项目"><svg viewBox="0 0 30 30"><path fill="#e8e8e8" stroke="#777" stroke-width="1.500" d="M1 15C8 3 22 3 29 15 22 27 8 27 1 15z"/><circle cx="15" cy="14" r="8" fill="#888"/><circle cx="15" cy="14" r="4" fill="#333"/><path stroke="#444" stroke-width="2" d="M15 3v23"/></svg></button><i class="arrow soft"></i>
      <button aria-label="编辑外观"><svg viewBox="0 0 30 30"><circle cx="13" cy="13" r="12" fill="#dcdcde" stroke="#ccc"/><ellipse cx="10" cy="7" rx="7" ry="4" fill="#f4f4f4"/><path fill="#eee" stroke="#bbb" d="m13 30 2-7L26 12l4 4-11 11z"/></svg></button>
      <button aria-label="应用布景"><svg viewBox="0 0 30 30"><path fill="#333" d="M1 12h28v17H1z"/><path fill="#eee" d="M5 13h4v5H5zm18 0h4v5h-4zM2 19h4v5H2zm9 1h4v5h-4zm8 0h4v5h-4zM6 25h5v4H6zm9 0h5v4h-5zm9-1h4v4h-4z"/><use href="#h-ball" x="4" width="22" height="22"/></svg></button><i class="arrow soft"></i>
      <button aria-label="视图设定"><svg viewBox="0 0 30 30"><path fill="#ddd" stroke="#666" stroke-width="2.500" d="M3 5h24v16H3z"/><path stroke="#555" stroke-width="2.500" d="M15 21v5m-5 1h10"/></svg></button><i class="arrow soft"></i>
    </div>
    <p class="iter">迭代 = 59</p>

    <section class="legend">
      <div class="scale">
        <div class="bar"><i class="c9"></i><i class="c8"></i><i class="c7"></i><i class="c6"></i><i class="c5"></i><i class="c4"></i><i class="c3"></i><i class="c2"></i><i class="c1"></i></div>
        <ol><li>20.818</li><li>18.505</li><li>16.192</li><li>13.879</li><li>11.566</li><li>9.253</li><li>6.939</li><li>4.626</li><li>2.313</li><li>0</li></ol>
      </div>
      <p>速度 [m/s]</p>
      <p>切面图 1: 等高线</p>
    </section>

    <svg class="model" viewBox="940 500 980 370">
      <defs>
        <clipPath id="fluid"><path d="M976 661 1392 626.500 1388.500 572.500 1875.500 534 1895 779 1408.500 821 1404 767.500 988 803z"/></clipPath>
        <linearGradient id="body" x1="0" x2="1"><stop offset="0" stop-color="#565864"/><stop offset=".44" stop-color="#585a66"/><stop offset=".56" stop-color="#636573"/><stop offset="1" stop-color="#636573"/></linearGradient>
        <linearGradient id="wirebox" x2="0" y2="1"><stop offset="0" stop-color="#9a9aa2" stop-opacity=".4"/><stop offset="1" stop-color="#b8b8b4" stop-opacity=".35"/></linearGradient>
      </defs>
      <path fill="url(#wirebox)" d="M955 607 1309 577 1879 532 1892 533 1912 781 1340 829 1006 858 975 855z"/>
      <path fill="#bcc1d2" stroke="#111" d="M970 644C960 650 963 700 967 745 971 790 978 818 984 821L988 803 976 661z"/>
      <path fill="#a9adbd" stroke="#111" d="M1317 561C1308 563 1306 595 1307 616L1321 615zM1322 793C1325 820 1333 842 1340 844L1336 791z"/>
      <path fill="url(#body)" stroke="#111" d="M970 644 1320.500 614.500 1317 561.500 1878.500 513.500 1902 796.500 1340 844 1335.500 791.500 984 821z"/>
      <path fill="#c2c7d8" stroke="#111" d="M970 662C964 668 966 700 969 735 972 770 978 798 984 803z"/>
      <g clip-path="url(#fluid)">
        <path fill="#00007f" d="M940 500h980v370H940z"/>
        <g transform="translate(1370 500) scale(.35714 .33333)">
          <path fill="#003f7f" d="M40 242 100 232 170 220 215 200 400 180 620 155 700 172 830 178 900 180 1020 180 1150 168 1250 154 1430 133 1480 805 1350 812 1200 822 1050 832 900 850 800 872 690 893 600 910 500 924 400 936 300 940 205 934 100 942z"/>
          <path fill="#007f7f" d="M45 270 100 281 155 281 190 270 250 250 350 234 450 225 680 226 900 234 1010 234 1150 226 1300 214 1430 198 1475 742 1320 752 1180 765 1030 780 900 800 780 825 640 850 500 875 400 888 320 892 260 886 200 880 150 890 90 914z"/>
          <path fill="#007f55" d="M45 304 85 314 90 340 110 348 170 332 260 295 350 283 480 276 600 277 740 281 900 275 1060 268 1250 254 1430 240 1475 692 1300 706 1100 728 950 748 800 775 650 806 500 832 400 843 300 845 200 826 145 826 130 835 128 862 90 874z"/>
          <path fill="#007f00" d="M50 340 110 365 200 350 260 338 350 326 500 319 700 314 900 306 1100 297 1300 285 1440 276 1475 660 1300 672 1100 692 900 723 750 752 600 778 450 798 300 808 200 809 140 809 90 840z"/>
          <path fill="#557f00" d="M50 362 108 382 160 375 250 366 400 355 600 348 850 342 1050 335 1250 324 1440 310 1475 626 1300 640 1100 660 900 690 700 725 550 750 400 768 290 776 200 790 140 794 85 828z"/>
          <path fill="#7f7f00" d="M30 374 62 380 100 400 160 394 230 400 330 396 450 386 600 380 800 377 1000 372 1200 362 1440 347 1475 590 1300 608 1100 632 900 662 700 692 550 714 400 734 290 745 200 770 140 775 90 805 55 815z"/>
          <path fill="#7f3f00" d="M0 375 35 375 35 390 100 418 180 422 270 432 400 422 600 414 680 415 780 424 900 429 1100 432 1300 431 1450 422 1475 513 1350 522 1200 546 1050 578 880 615 710 658 550 680 400 698 285 714 200 745 130 756 70 795 60 815 20 815z"/>
          <path fill="#7f0000" d="M5 375 15 405 40 431 75 440 150 445 218 454 245 480 275 491 420 486 600 494 800 503 997 509 850 540 700 573 550 605 400 640 290 655 262 670 240 700 200 714 100 740 65 755 42 785 38 815-1250 1000-1250 300z"/>
        </g>
      </g>
      <path fill="none" stroke="#111" d="M976 661 1392 626.500 1388.500 572.500 1875.500 534 1895 779 1408.500 821 1404 767.500 988 803zM970 662 976 661M984 821 970 644M1880 534 1900 780"/>
      <path fill="none" stroke="#000" stroke-width="1.600" d="M1309 577 955 607 986 609 1006 858 975 855 955 607M986 609 1309 582 1388 575 1879 532 1890 532 1892 535 1912 781 1340 829 1006 858M975 855 1329 825M1895 781 1912 781"/>
      <path stroke="#0a6a10" stroke-width="1.500" d="M976 732 1016 729M976 732 973 690"/>
      <path fill="#0a6a10" d="M1013 724v9l13-4zM969 695h9l-5-13z"/>
      <path stroke="#0000f0" stroke-width="1.500" d="M976 732 974 702"/>
      <path stroke="#0000f0" d="M972 732h14M973 729l6 6m0-6-6 6M976 728v8"/>
      <path fill="#0000f0" d="M971 709h6l-3-10zM983 728v7l9-4z"/>
      <g class="axis"><text x="1027" y="726">X</text><text x="975" y="680">Y</text><text x="985" y="729">Z</text></g>
    </svg>

    <svg class="triad" viewBox="0 0 46 46">
      <path stroke="#1a7a20" stroke-width="3" d="M12 43 10 22"/><path fill="#1a6a20" d="M5 24h9l-5-9z"/>
      <path stroke="#a01818" stroke-width="3" d="M12 43 34 41"/><path fill="#b01818" d="M31 37v9l9-5z"/>
      <circle cx="12" cy="43" r="4" fill="#1010a0"/>
      <text x="4" y="12" fill="#108020">Y</text><text x="39" y="44" fill="#e02020">X</text>
    </svg>
    <p class="mark">CSDN @偏爱星星</p>
    <button class="handle" aria-label="折叠面板"><i class="knob"></i></button>
  </main>
</div>
</body>
</html>
```
FILE: styles.css
```css
:root {
  --chrome: #d7dbe0;
  --tab: #aaabaf;
  --line: #808388;
}
* { box-sizing: border-box; }
html, body { height: 100%; }
body {
  margin: 0;
  display: flex;
  flex-direction: column;
  overflow: hidden;
  background: var(--chrome);
  color: #000;
  font: 12px/20px "Noto Sans", "Noto Sans CJK SC", sans-serif;
}
button { margin: 0; padding: 0; border: 0; background: none; font: inherit; color: inherit; }
ul, ol { margin: 0; padding: 0; list-style: none; }
p { margin: 0; }
svg { display: block; flex: none; }
.defs { position: absolute; width: 0; height: 0; }
.ic { width: 26px; height: 26px; }

.arrow {
  flex: none;
  width: 8px;
  height: 4px;
  background: #333;
  clip-path: polygon(0 0, 100% 0, 50% 100%);
}
.arrow.soft { width: 9px; height: 5px; margin: 0 3px; background: #96989c; }

/* Ribbon */
.ribbon {
  flex: none;
  display: flex;
  align-items: flex-end;
  height: 110px;
  padding-bottom: 2px;
  font: 13px/13px "Noto Sans CJK SC", sans-serif;
}
.col { display: flex; flex-direction: column; padding-bottom: 2px; }
.row { display: flex; align-items: center; gap: 7px; height: 38px; white-space: nowrap; }
.row .arrow { margin-left: auto; }
.col-first { width: 92px; }
.col-first .row { gap: 4px; }
.col-set { width: 118px; padding-left: 5px; padding-right: 7px; }
.col-tools { width: 126px; padding-left: 7px; padding-right: 2px; }
.group { display: flex; border-right: 1px solid #bfc3c8; }
.group.padded { padding: 0 1px; }
.col-set + .group { border-left: 1px solid #bfc3c8; }
.big {
  display: flex;
  flex-direction: column;
  align-items: center;
  width: 42px;
  height: 108px;
  padding: 1px 0 9px;
}
.big.wide { width: 50px; }
.big span { width: 40px; margin-top: 2px; text-align: center; }
.big .arrow { margin-top: auto; }

/* Workspace */
.workspace {
  flex: 1;
  min-height: 0;
  display: grid;
  grid-template: 23px minmax(0, 1fr) / 291px minmax(0, 1fr);
}
.tabs {
  grid-area: 1 / 1 / 2 / 3;
  z-index: 1;
  display: flex;
  width: max-content;
  font: 12px/18px Roboto, "Noto Sans CJK SC", sans-serif;
}
.tab {
  width: 56px;
  background: var(--tab);
  border: solid var(--line);
  border-width: 1px 1px 1px 0;
  font-size: 13px;
  white-space: nowrap;
}
.t-first { width: 43px; padding-right: 12px; }
.t-mid { width: 68px; }
.t-dim { width: 108px; font-size: 12px; }
.t-addin { width: 116px; font-size: 12px; }
.t-sim { width: 73px; font-size: 12px; }
.t-mbd { font-size: 12px; }
.t-prep { width: 68px; }
.t-flow { width: 101px; font-size: 12px; }
.tab.active { background: var(--chrome); border-top-color: var(--chrome); color: #444; }

.side {
  grid-area: 2 / 1 / 3 / 2;
  display: flex;
  min-height: 0;
  overflow: hidden;
  border-right: 1px solid var(--line);
}
.toolbar { flex: none; width: 48px; padding-top: 2px; overflow: hidden; }
.grip { width: 46px; height: 2px; border-top: 2px dotted #85888c; }
.tools { width: 46px; padding: 9px 0 2px; border-bottom: 1px solid var(--line); }
.ruled { padding: 4px 0 7px; }
.tool { display: flex; align-items: center; justify-content: space-between; width: 42px; height: 38px; }
.views { display: flex; }
.view-strip { width: 33px; padding-top: 5px; border-right: 1px solid var(--line); overflow: hidden; }
.view-strip .grip { width: 30px; margin-bottom: 8px; }

.panel { flex: 1; min-width: 0; padding: 3px 2px 0 0; }
.knob {
  width: 6px;
  height: 6px;
  border: 1px solid #888;
  border-radius: 50%;
  background: #ddd;
}
.pull {
  display: flex;
  align-items: center;
  justify-content: center;
  height: 17px;
  border: solid #6d7690;
  border-width: 1px 0;
}
.ptabs { display: flex; height: 38px; margin: 4px 0 5px 1px; }
.ptab {
  display: flex;
  align-items: center;
  justify-content: center;
  width: 52px;
  background: var(--tab);
  border: 1px solid var(--line);
  border-width: 1px 0 1px 1px;
}
.ptab svg { width: 28px; height: 28px; }
.ptab.on { width: 53px; background: none; border-width: 1px 1px 0 1px; }
.ptab.on svg { width: 26px; height: 26px; }
.scroll { flex: 1; display: flex; justify-content: flex-end; align-items: flex-end; border-bottom: 1px solid var(--line); }
.scroll button {
  display: flex;
  align-items: center;
  justify-content: center;
  width: 19px;
  height: 20px;
  background: #eceef0;
  border: 1px solid #b4b7bb;
}
.tri { width: 3px; height: 6px; background: #000; }
.left { clip-path: polygon(100% 0, 100% 100%, 0 50%); }
.right { clip-path: polygon(0 0, 0 100%, 100% 50%); }

/* Feature trees */
.upper { height: 198px; }
.node { display: flex; align-items: center; height: 20px; white-space: nowrap; }
.tree > li > .node { padding-left: 4px; }
.ti { width: 16px; height: 16px; margin-right: 8px; }
.l1 { padding-left: 13px; }
.tree ul ul { padding-left: 23px; }
.tree li li > .node { padding-left: 14px; }
.tree li li > .node:has(.box) { padding-left: 0; }
.tree li li {
  background:
    repeating-linear-gradient(#777 0 1px, transparent 1px 2px) 0 0 / 1px 100% no-repeat,
    repeating-linear-gradient(90deg, #777 0 1px, transparent 1px 2px) 0 10px / 13px 1px no-repeat;
}
.tree li li:last-child { background-size: 1px 10px, 13px 1px; }
.box {
  width: 9px;
  height: 9px;
  margin: 0 9px 0 -4px;
  border: 1px solid #85888e;
  border-radius: 1px;
  background: linear-gradient(#3a4ea0, #3a4ea0) center / 5px 1px no-repeat, #fff;
}
.splitter { display: flex; align-items: center; justify-content: space-between; height: 5px; }
.splitter > i { width: 106px; height: 5px; border: solid #5d6480; border-width: 2px 0; border-top-color: #8d92ac; }
.splitter span { display: flex; gap: 3px; }
.splitter b { width: 5px; height: 3px; background: #504c90; clip-path: polygon(50% 0, 100% 100%, 0 100%); }

/* Graphics area */
.viewport {
  grid-area: 1 / 2 / 3 / 3;
  position: relative;
  overflow: hidden;
  border-top: 1px solid var(--line);
  background:
    radial-gradient(ellipse 96% 56% at 14% 0%, #fff 48%, rgba(255, 255, 255, 0) 100%),
    linear-gradient(#eef0f5 0%, #dddfea 32%, #dcdfe9 44%, #e0e4ec 54%, #eff1f5 63%, #fcfcfd 74%, #fdfdfe 92%, #f9fafb 100%);
  font: 12px/16px "Liberation Sans", "Noto Sans CJK SC", sans-serif;
}
.hud { display: flex; justify-content: flex-end; align-items: center; height: 38px; margin-top: 2px; padding-right: 290px; }
.hud button { display: flex; align-items: center; justify-content: center; width: 38px; height: 38px; }
.hud svg { width: 30px; height: 30px; }
.hud .pressed { background: #a2a2a4; border: 1px solid #444; }
.iter { width: 52px; margin: 3px 606px 0 auto; white-space: nowrap; }
.legend { position: absolute; left: 35px; top: 45px; }
.scale { display: flex; align-items: center; margin-bottom: 7px; }
.bar { display: flex; flex-direction: column; width: 21px; height: 202px; border: 1px solid #444; }
.bar i { flex: 1; }
.scale ol { display: flex; flex-direction: column; justify-content: space-between; height: 218px; }
.scale li { display: flex; align-items: center; gap: 9px; }
.scale li::before { content: ""; width: 3px; height: 1px; background: #000; }
.legend p { margin-bottom: 13px; }
.c9 { background: #f00; }
.c8 { background: #ff8000; }
.c7 { background: #ff0; }
.c6 { background: #af0; }
.c5 { background: #0f0; }
.c4 { background: #00ffaa; }
.c3 { background: #0ff; }
.c2 { background: #0080ff; }
.c1 { background: #00f; }
.model { position: absolute; left: 649px; top: 389px; width: 980px; height: 370px; }
.axis { fill: #0a4a10; font-size: 10px; }
.triad { position: absolute; left: 29px; bottom: 0; width: 46px; height: 46px; font-size: 10px; }
.mark { position: absolute; right: 15px; bottom: 7px; color: #8c8c8e; font-size: 17px; line-height: 22px; }
.handle {
  position: absolute;
  left: 0;
  top: 532px;
  display: flex;
  align-items: center;
  justify-content: center;
  width: 8px;
  height: 39px;
  background: var(--chrome);
  border: 1px solid var(--line);
  border-left: 0;
}
```
